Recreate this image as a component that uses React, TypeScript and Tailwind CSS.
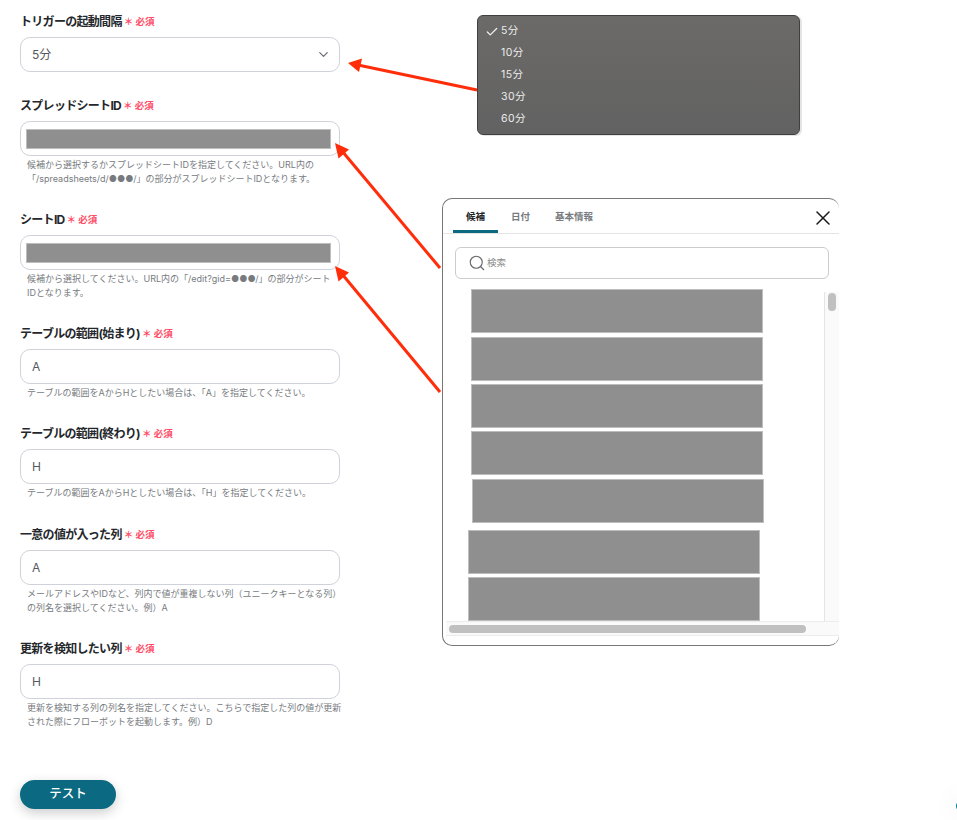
import {Check, ChevronDown, Search, X} from "lucide-react";
import type {ReactNode} from "react";

const FONT = "font-['Inter','Noto_Sans_CJK_JP',sans-serif]";

interface FieldProps {
    label: string
    className?: string
    help?: string[]
    children: ReactNode
}

function Field({label, className, help, children}: FieldProps) {
    return (
        <div className={className}>
            <div className="flex h-[17px] items-center">
                <span className="text-[12px] leading-[17px] font-bold tracking-[-0.7px] text-[#24272b]">{label}</span>
                <span className="ml-[2px] text-[9.500px] leading-[17px] font-bold text-[#ff4d67]">＊ 必須</span>
            </div>
            <div className="mt-[7px] flex h-[35px] w-[320px] items-center rounded-[10px] border border-[#cfd2da] bg-white pr-[10px] pl-[11px] text-[12px] text-[#55585e]">
                {children}
            </div>
            {help && (
                <div className="mt-[2px] w-[320px] pl-[7px] text-[9px] leading-[14px] whitespace-nowrap text-[#777b80]">
                    {help.map((line) => <p key={line}>{line}</p>)}
                </div>
            )}
        </div>
    )
}

function Masked() {
    return <div className="-ml-[6px] h-5 w-[305px] shrink-0 border border-[#bdbdbd] bg-[#8f8f8f]"/>
}

function Arrows() {
    return (
        <svg className="pointer-events-none absolute top-0 left-0 z-10" width="957" height="820" fill="none">
            <g stroke="#ff2d0a" strokeWidth="3">
                <path d="M477 90 358 65"/>
                <path d="M440 268 342 151"/>
                <path d="M440 392 342 274"/>
            </g>
            <g fill="#ff2d0a">
                <path d="M348 63 362 58.500 359 72z"/>
                <path d="M335 143 349 149.500 338.500 158.500z"/>
                <path d="M335 266 349 272.500 338.500 281.500z"/>
            </g>
        </svg>
    )
}

function IntervalMenu() {
    const items = ["5分", "10分", "15分", "30分", "60分"]
    return (
        <div className="absolute top-[15px] left-[477px] w-[323px] rounded-[6px] border border-[#3f3f3f] bg-gradient-to-b from-[#6b6a68] to-[#626262] py-1 shadow-[2px_1px_0_#e4e4e4]">
            {items.map((item, i) => (
                <div key={item} className="flex h-[22px] items-center text-[10.500px] tracking-[0.4px] text-[#ececec]">
                    <span className="mt-px flex w-[23px] justify-end pr-[2px]">
                        {i === 0 && <Check size={14} strokeWidth={2.2} color="#f0f0f0"/>}
                    </span>
                    {item}
                </div>
            ))}
        </div>
    )
}

function Block({className}: {className: string}) {
    return <div className={`h-11 w-[292px] shrink-0 border border-[#bdbdbd] bg-[#8f8f8f] ${className}`}/>
}

function PickerModal() {
    return (
        <div className="absolute top-[198px] left-[442px] flex h-[448px] w-[397px] flex-col overflow-hidden rounded-[10px] border border-r-0 border-[#777777] bg-white">
            <div className="flex h-[35px] shrink-0 items-start border-b border-[#e4e4e4] pl-[10px] text-[9.500px] font-bold">
                <div className="flex h-[34px] w-[45px] justify-center border-b-[3px] border-[#0b6a82] pt-[11px] text-[#24272b]">候補</div>
                <div className="ml-[13px] pt-[11px] text-[#777b80]">日付</div>
                <div className="ml-[25px] pt-[11px] text-[#777b80]">基本情報</div>
                <X className="mt-[7px] mr-[4px] ml-auto" size={24} strokeWidth={1.5} color="#1a1a1a"/>
            </div>
            <div className="mx-[12px] mt-[13px] flex h-[32px] w-[374px] shrink-0 items-center rounded-[6px] border border-[#cccccc] pl-[12px] text-[9.500px] text-[#8a8a8a]">
                <Search size={18} strokeWidth={1.5} color="#666666"/>
                <span className="ml-px">検索</span>
            </div>
            <div className="mt-[10px] flex min-h-0 flex-1">
                <div className="flex min-w-0 flex-1 flex-col overflow-hidden">
                    <Block className="ml-[28px]"/>
                    <Block className="mt-1 ml-[28px]"/>
                    <Block className="mt-[3px] ml-[28px]"/>
                    <Block className="mt-[3px] ml-[28px]"/>
                    <Block className="mt-1 ml-[29px]"/>
                    <Block className="mt-[7px] ml-[25px]"/>
                    <Block className="mt-[3px] ml-[25px]"/>
                </div>
                <div className="mt-[3px] w-[15px] shrink-0 border-l border-[#e4e4e4] bg-[#fafafa] pt-px pl-[3px]">
                    <div className="h-[18px] w-2 rounded-full bg-[#c0c0c0]"/>
                </div>
            </div>
            <div className="mb-[9px] ml-[3px] flex h-[15px] shrink-0 items-center border-y border-[#ececec] bg-[#fafafa] pl-[3px]">
                <div className="h-2 w-[357px] rounded-full bg-[#c0c0c0]"/>
            </div>
        </div>
    )
}

export default function App() {
    return (
        <div className={`relative h-[820px] w-[957px] overflow-hidden bg-white ${FONT}`}>
            <div className="flex flex-col pt-[13px] pl-5">
                <Field label="トリガーの起動間隔">
                    <span className="flex-1">5分</span>
                    <ChevronDown className="-mr-[2px]" size={15} strokeWidth={2} color="#6b6f75"/>
                </Field>
                <Field className="mt-[25px]" label="スプレッドシートID" help={[
                    "候補から選択するかスプレッドシートIDを指定してください。URL内の",
                    "「/spreadsheets/d/●●●/」の部分がスプレッドシートIDとなります。",
                ]}>
                    <Masked/>
                </Field>
                <Field className="mt-[25px]" label="シートID" help={[
                    "候補から選択してください。URL内の「/edit?gid=●●●/」の部分がシート",
                    "IDとなります。",
                ]}>
                    <Masked/>
                </Field>
                <Field className="mt-[25px]" label="テーブルの範囲(始まり)" help={["テーブルの範囲をAからHとしたい場合は、「A」を指定してください。"]}>
                    A
                </Field>
                <Field className="mt-[25px]" label="テーブルの範囲(終わり)" help={["テーブルの範囲をAからHとしたい場合は、「H」を指定してください。"]}>
                    H
                </Field>
                <Field className="mt-[26px]" label="一意の値が入った列" help={[
                    "メールアドレスやIDなど、列内で値が重複しない列（ユニークキーとなる列）",
                    "の列名を選択してください。例）A",
                ]}>
                    A
                </Field>
                <Field className="mt-[25px]" label="更新を検知したい列" help={[
                    "更新を検知する列の列名を指定してください。こちらで指定した列の値が更新",
                    "された際にフローボットを起動します。例）D",
                ]}>
                    H
                </Field>
                <button className={`mt-[51px] h-[29px] w-[96px] rounded-full bg-[#0b6a82] text-[12.500px] font-medium text-white shadow-[0_4px_12px_rgba(0,0,0,0.2)] ${FONT}`}>
                    テスト
                </button>
            </div>
            <IntervalMenu/>
            <PickerModal/>
            <Arrows/>
            <div className="absolute top-[800px] left-[956px] h-3 w-[10px] rounded-l-full bg-[#0b7f96] shadow-[0_0_24px_rgba(0,0,0,0.15)]"/>
        </div>
    )
}
